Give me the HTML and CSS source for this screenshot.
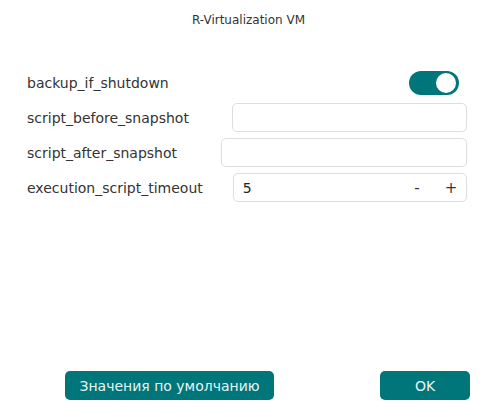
FILE: index.html
```html
<!DOCTYPE html>
<html lang="ru">
<head>
    <meta charset="UTF-8">
    <meta name="viewport" content="width=device-width, initial-scale=1.0">
    <title>R-Virtualization VM</title>
    <link rel="stylesheet" href="styles.css">
</head>
<body>
    <div class="dialog">
        <h1 class="dialog-title">R-Virtualization VM</h1>

        <div class="settings">
            <div class="setting-row">
                <label>backup_if_shutdown</label>
                <div class="toggle on"><span class="knob"></span></div>
            </div>

            <div class="setting-row">
                <label for="before">script_before_snapshot</label>
                <input type="text" id="before" class="field field-before">
            </div>

            <div class="setting-row">
                <label for="after">script_after_snapshot</label>
                <input type="text" id="after" class="field field-after">
            </div>

            <div class="setting-row">
                <label for="timeout">execution_script_timeout</label>
                <div class="number-field">
                    <input type="text" id="timeout" value="5">
                    <button class="step step-minus">-</button>
                    <button class="step step-plus">+</button>
                </div>
            </div>
        </div>

        <div class="dialog-footer">
            <button class="btn btn-defaults">Значения по умолчанию</button>
            <button class="btn btn-ok">OK</button>
        </div>
    </div>
</body>
</html>
```

FILE: styles.css
```css
body {
    margin: 0;
    padding: 0;
    background: #ffffff;
    font-family: 'DejaVu Sans', Verdana, sans-serif;
    color: #2b2b2b;
}

.dialog {
    height: 411px;
    display: flex;
    flex-direction: column;
    box-sizing: border-box;
}

.dialog-title {
    margin: 0;
    padding-top: 13px;
    height: 68px;
    box-sizing: border-box;
    font-size: 12px;
    font-weight: normal;
    line-height: 15px;
    text-align: center;
    color: #333;
}

.settings {
    display: flex;
    flex-direction: column;
    gap: 6px;
    padding: 0 30px 0 27px;
}

.setting-row {
    display: flex;
    align-items: center;
    height: 29px;
}

.setting-row label {
    font-size: 14px;
    color: #333;
    white-space: nowrap;
}

.toggle {
    margin-left: auto;
    margin-right: 8px;
    width: 50px;
    height: 24px;
    border-radius: 12px;
    background: #00767a;
    position: relative;
}

.toggle .knob {
    position: absolute;
    top: 2px;
    right: 3px;
    width: 20px;
    height: 20px;
    border-radius: 50%;
    background: #ffffff;
}

.field {
    flex: 1;
    min-width: 0;
    height: 29px;
    box-sizing: border-box;
    border: 1px solid #dedede;
    border-radius: 5px;
    padding: 0 10px;
    font-family: inherit;
    font-size: 14px;
    outline: none;
}

.field-before {
    margin-left: 43px;
}

.field-after {
    margin-left: 44px;
}

.number-field {
    flex: 1;
    min-width: 0;
    margin-left: 30px;
    height: 29px;
    box-sizing: border-box;
    border: 1px solid #dedede;
    border-radius: 5px;
    display: flex;
    align-items: center;
    padding: 0 6px 0 9px;
}

.number-field input {
    flex: 1;
    min-width: 0;
    border: none;
    outline: none;
    padding: 0;
    font-family: inherit;
    font-size: 14px;
    color: #222;
}

.step {
    border: none;
    background: none;
    padding: 0;
    width: 18px;
    font-family: inherit;
    font-size: 15px;
    color: #333;
    cursor: pointer;
}

.step-minus {
    margin-right: 16px;
}

.dialog-footer {
    margin-top: auto;
    display: flex;
    justify-content: space-between;
    padding: 0 27px 11px 65px;
}

.btn {
    height: 29px;
    border: none;
    border-radius: 5px;
    background: #00767a;
    color: #e8f4f4;
    font-family: inherit;
    font-size: 14px;
    cursor: pointer;
}

.btn-defaults {
    width: 209px;
}

.btn-ok {
    width: 90px;
}
```
